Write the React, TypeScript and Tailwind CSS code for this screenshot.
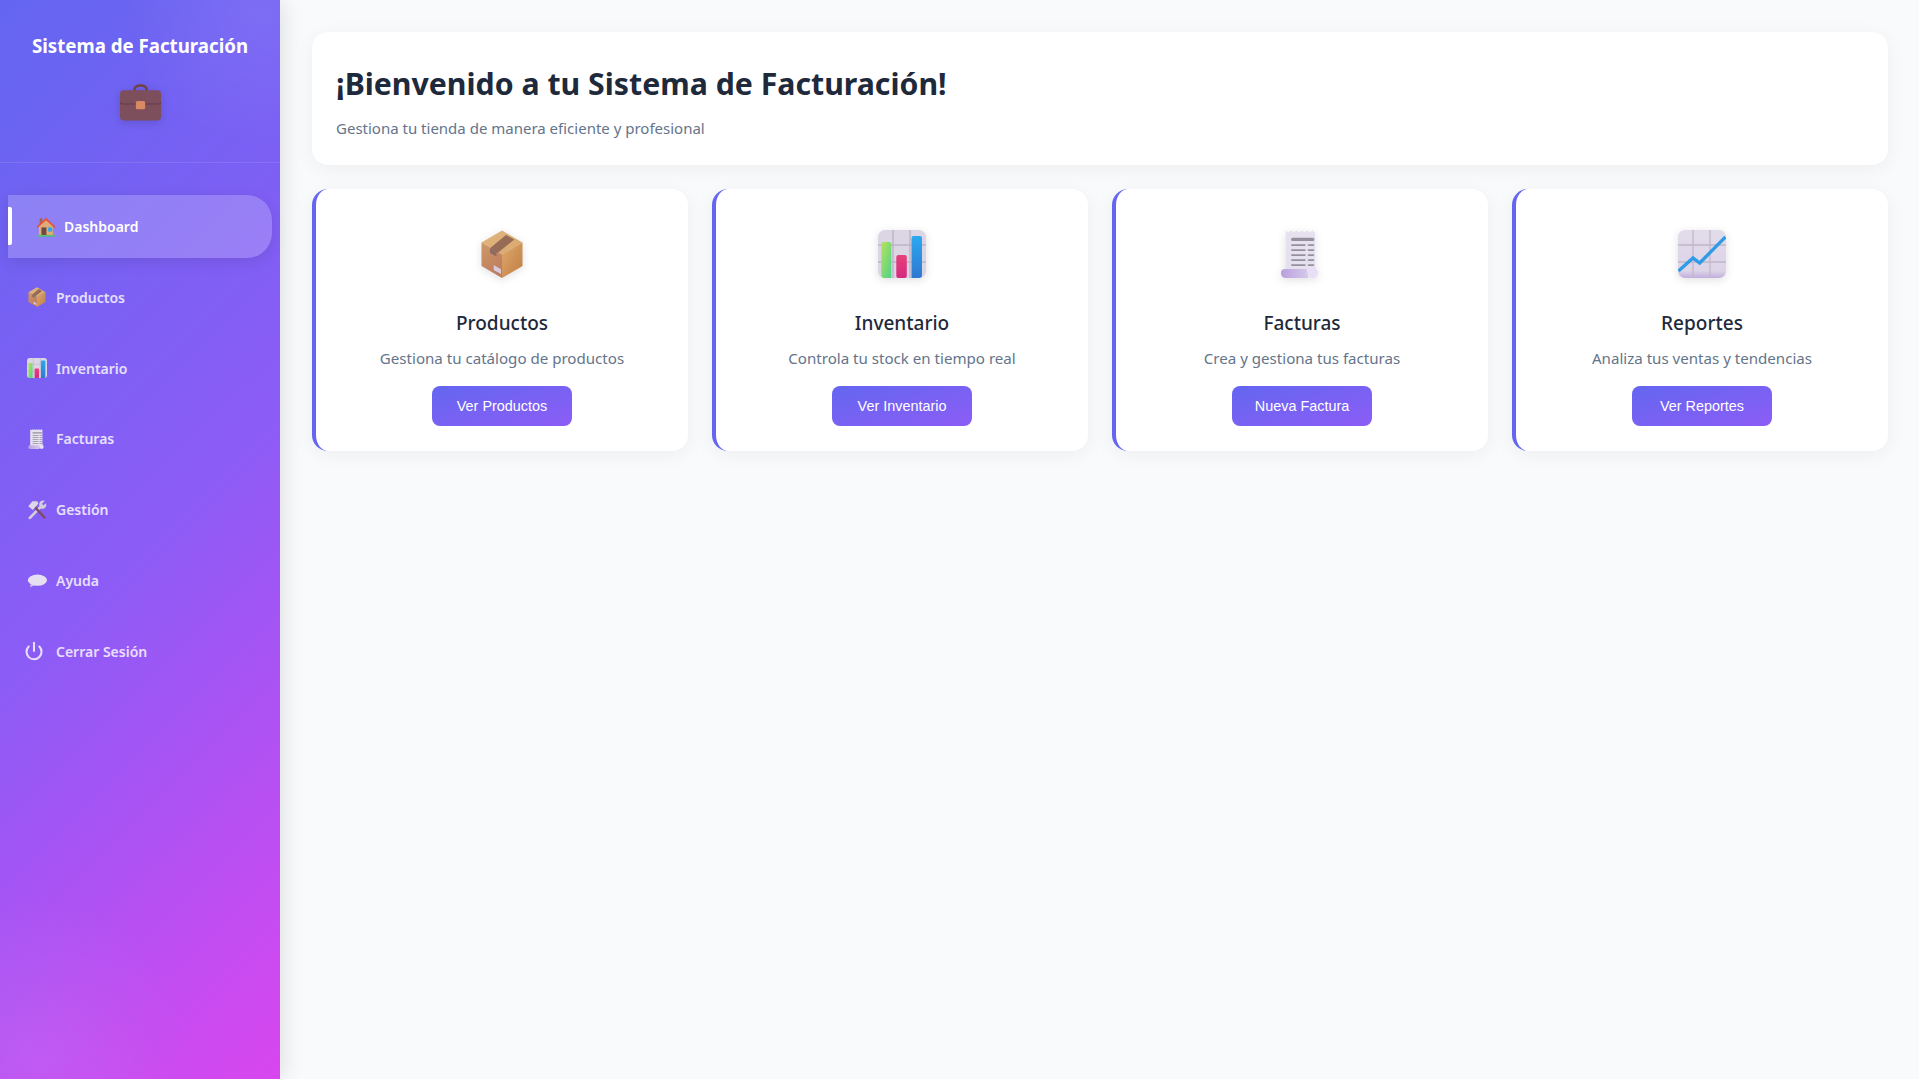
import React from 'react';
import { Power } from 'lucide-react';

type IconProps = { size: number; className?: string };

const BoxIcon = ({ size, className }: IconProps) => (
  <svg width={size} height={size} viewBox="0 0 48 48" className={className}>
    <defs>
      <linearGradient id="boxTop" x1="0" y1="0" x2="1" y2="1">
        <stop offset="0" stopColor="#e0b67e" />
        <stop offset="1" stopColor="#d8a870" />
      </linearGradient>
      <linearGradient id="boxLeft" x1="0" y1="0" x2="0.5" y2="1">
        <stop offset="0" stopColor="#cd9866" />
        <stop offset="1" stopColor="#bf7d60" />
      </linearGradient>
      <linearGradient id="boxRight" x1="0" y1="0" x2="1" y2="1">
        <stop offset="0" stopColor="#e0aa6c" />
        <stop offset="1" stopColor="#bf7c42" />
      </linearGradient>
    </defs>
    <path d="M24 0.5 44.5 12.5 24 24.5 3.5 12.5Z" fill="url(#boxTop)" />
    <path d="M3.5 12.5 24 24.5V48L3.5 36Z" fill="url(#boxLeft)" />
    <path d="M44.5 12.5V36L24 48V24.5Z" fill="url(#boxRight)" />
    <path d="M28 5 36.3 9.5 19.5 23 12 18.3Z" fill="#976c57" />
    <path d="M12 18.3 18.5 22V26.5L12 23Z" fill="#8c6c62" />
    <path d="M15.7 35 23 39.3V44L15.7 40Z" fill="#d9c9dd" />
  </svg>
);

const ChartIcon = ({ size, className }: IconProps) => (
  <svg width={size} height={size} viewBox="0 0 48 48" className={className}>
    <defs>
      <linearGradient id="barGreen" x1="0" y1="0" x2="1" y2="1">
        <stop offset="0" stopColor="#b6e35a" />
        <stop offset="1" stopColor="#4fd18a" />
      </linearGradient>
      <linearGradient id="barPink" x1="0" y1="0" x2="0" y2="1">
        <stop offset="0" stopColor="#e8407a" />
        <stop offset="1" stopColor="#d42a80" />
      </linearGradient>
      <linearGradient id="barBlue" x1="0" y1="0" x2="0" y2="1">
        <stop offset="0" stopColor="#2aa8f0" />
        <stop offset="1" stopColor="#2f78d0" />
      </linearGradient>
    </defs>
    <rect x="0" y="0" width="48" height="48" rx="7" fill="#dcd6e4" />
    <path d="M15 0V48M32 0V48M0 15H48M0 32H48" stroke="#bcb4c8" strokeWidth="1.4" />
    <path d="M3.3 14q0-2 2-2h6q2 0 2 2V48H6q-2.7 0-2.7-3Z" fill="url(#barGreen)" />
    <rect x="18.3" y="25" width="10.5" height="23" rx="2" fill="url(#barPink)" />
    <path d="M33.5 8q0-2 2-2h6.5q2 0 2 2V45q0 3-3 3H33.5Z" fill="url(#barBlue)" />
  </svg>
);

const ReceiptIcon = ({ size, className }: IconProps) => (
  <svg width={size} height={size} viewBox="0 0 48 48" className={className}>
    <defs>
      <linearGradient id="curl" x1="0" y1="0" x2="1" y2="0">
        <stop offset="0" stopColor="#b9a0dc" />
        <stop offset="1" stopColor="#d6c8ec" />
      </linearGradient>
    </defs>
    <path d="M7.7 1 10.5 2.5 13 0.5 15.8 2.5 18.5 0.5 21 2.5 23.8 0.5 26.5 2.5 29 0.5 31.8 2.5 34.5 0.5 37 2.5V41H7.7Z" fill="#e6e1ee" />
    <path d="M3 43Q3 39 7 39H30V48H8Q3 48 3 43Z" fill="url(#curl)" />
    <path d="M28.7 36.7H37L40 42Q40 48 34 48 29 47 28.7 40Z" fill="#e6dff5" />
    <rect x="13" y="7.7" width="23.3" height="3.3" rx="1.6" fill="#96909e" />
    <g fill="#96909e">
      <rect x="13" y="14.2" width="14.7" height="1.7" rx="0.8" />
      <rect x="29.7" y="14.2" width="6.6" height="1.7" rx="0.8" />
      <rect x="13" y="19.2" width="14.7" height="1.7" rx="0.8" />
      <rect x="29.7" y="19.2" width="6.6" height="1.7" rx="0.8" />
      <rect x="13" y="24.2" width="14.7" height="1.7" rx="0.8" />
      <rect x="29.7" y="24.2" width="6.6" height="1.7" rx="0.8" />
      <rect x="13" y="29.2" width="14.7" height="1.7" rx="0.8" />
      <rect x="29.7" y="29.2" width="6.6" height="1.7" rx="0.8" />
      <rect x="13" y="34.2" width="14.7" height="1.7" rx="0.8" />
      <rect x="29.7" y="34.2" width="6.6" height="1.7" rx="0.8" />
    </g>
  </svg>
);

const TrendIcon = ({ size, className }: IconProps) => (
  <svg width={size} height={size} viewBox="0 0 48 48" className={className}>
    <defs>
      <linearGradient id="trendBg" x1="0" y1="0" x2="0" y2="1">
        <stop offset="0" stopColor="#e2dcea" />
        <stop offset="0.85" stopColor="#ddd4e8" />
        <stop offset="1" stopColor="#c2aedd" />
      </linearGradient>
    </defs>
    <rect x="0" y="0" width="48" height="48" rx="7" fill="url(#trendBg)" />
    <path d="M15 0V48M32 0V48M0 15H48M0 32H48" stroke="#c0b7cb" strokeWidth="1.3" />
    <path d="M0.5 41 15 28 21.7 33 47.5 7" fill="none" stroke="#2f9be6" strokeWidth="3.3" />
  </svg>
);

const ToolsIcon = ({ size, className }: IconProps) => (
  <svg width={size} height={size} viewBox="0 0 48 48" className={className}>
    <path d="M7 43 35 14" stroke="#d2cedd" strokeWidth="6.5" strokeLinecap="round" />
    <path d="M31 4Q38 0 43 2L36 9 39 13 46 7Q48 14 43 19 38 23 32 20 27 12 31 4Z" fill="#d2cedd" />
    <path d="M17 15 42 42" stroke="#7e4c66" strokeWidth="6" strokeLinecap="round" />
    <path d="M3 15 13 3 25 3 27 9 14 24Z" fill="#dbd7e4" />
  </svg>
);

const BubbleIcon = ({ size, className }: IconProps) => (
  <svg width={size} height={size} viewBox="0 0 48 48" className={className}>
    <ellipse cx="25" cy="22" rx="23" ry="13.5" fill="#e6dff1" />
    <path d="M9 31 7 39 18 34Z" fill="#d3c7e9" />
  </svg>
);

const HouseIcon = ({ size, className }: IconProps) => (
  <svg width={size} height={size} viewBox="0 0 48 48" className={className}>
    <rect x="9" y="3" width="6" height="12" fill="#a0654a" />
    <path d="M7 22 24 6 41 22V44H7Z" fill="#e0ab78" />
    <path d="M1 24 24 2 47 24 44 26 24 8 4 26Z" fill="#e8502e" />
    <rect x="13" y="25" width="12" height="19" fill="#6e4a3e" />
    <rect x="29" y="25" width="10" height="10" fill="#2fa8ee" />
    <rect x="2" y="43" width="44" height="4" fill="#4fc46a" />
  </svg>
);

const BriefcaseIcon = ({ size, className }: IconProps) => (
  <svg width={size} height={size} viewBox="0 0 40 35" className={className}>
    <path d="M14 7V5.5Q14 1 20 1 26 1 26 5.5V7" fill="none" stroke="#6f4244" strokeWidth="2.4" />
    <rect x="0" y="5.5" width="40" height="29.5" rx="3.5" fill="#7d4f5c" />
    <path d="M0 17.5Q0 19 3 19H37Q40 19 40 17.5" fill="none" stroke="#643c4a" strokeWidth="1" />
    <rect x="15.5" y="16" width="9" height="8" rx="1.5" fill="#d98a62" />
  </svg>
);

const navItems = [
  { label: 'Productos', Icon: BoxIcon },
  { label: 'Inventario', Icon: ChartIcon },
  { label: 'Facturas', Icon: ReceiptIcon },
  { label: 'Gestión', Icon: ToolsIcon },
  { label: 'Ayuda', Icon: BubbleIcon },
];

const cards = [
  { title: 'Productos', text: 'Gestiona tu catálogo de productos', action: 'Ver Productos', Icon: BoxIcon },
  { title: 'Inventario', text: 'Controla tu stock en tiempo real', action: 'Ver Inventario', Icon: ChartIcon },
  { title: 'Facturas', text: 'Crea y gestiona tus facturas', action: 'Nueva Factura', Icon: ReceiptIcon },
  { title: 'Reportes', text: 'Analiza tus ventas y tendencias', action: 'Ver Reportes', Icon: TrendIcon },
];

export default function App() {
  return (
    <div className="flex min-h-screen bg-[#f8fafc] font-['Noto_Sans',sans-serif]">
      <aside className="w-[280px] shrink-0 relative bg-[radial-gradient(circle_at_92%_1%,rgba(255,255,255,0.07),transparent_12%),radial-gradient(circle_at_10%_98%,rgba(255,255,255,0.07),transparent_15%),linear-gradient(135deg,#6366f1_0%,#8b5cf6_50%,#d946ef_100%)] shadow-[4px_0_20px_rgba(0,0,0,0.1)]">
        <div className="h-[163px] pt-[32px] flex flex-col items-center border-b border-white/10">
          <h1 className="text-[18.7px] leading-[28px] font-bold text-white">Sistema de Facturación</h1>
          <BriefcaseIcon size={41} className="mt-[22px] drop-shadow-[0_2px_4px_rgba(0,0,0,0.15)]" />
        </div>
        <nav className="pt-[32px] flex flex-col gap-[8px]">
          <a className="relative h-[63px] w-[264px] ml-[8px] flex items-center pl-[28px] gap-[8px] rounded-r-[25px] bg-white/20 shadow-[0_4px_15px_rgba(0,0,0,0.1)] text-[14px] font-semibold text-white">
            <span className="absolute left-0 top-[12px] h-[38px] w-[4px] bg-white rounded-r-[2px]" />
            <HouseIcon size={20} />
            Dashboard
          </a>
          {navItems.map(({ label, Icon }) => (
            <a key={label} className="h-[62.8px] flex items-center pl-[27px] gap-[9px] text-[14px] font-semibold text-white/80">
              <Icon size={20} />
              {label}
            </a>
          ))}
          <a className="h-[62.8px] flex items-center pl-[24px] gap-[12px] text-[14px] font-semibold text-white/80">
            <Power size={20} strokeWidth={2.5} />
            Cerrar Sesión
          </a>
        </nav>
      </aside>
      <main className="flex-1 pl-[32px] pr-[31px] py-[32px] flex flex-col gap-[24px]">
        <header className="h-[133px] bg-white rounded-[16px] px-[24px] pt-[30px] shadow-[0_4px_20px_rgba(0,0,0,0.05)]">
          <h2 className="text-[30.25px] leading-[44px] font-bold text-[#1e293b]">¡Bienvenido a tu Sistema de Facturación!</h2>
          <p className="mt-[11px] text-[15px] leading-[22px] text-[#64748b]">Gestiona tu tienda de manera eficiente y profesional</p>
        </header>
        <section className="grid grid-cols-4 gap-[24px]">
          {cards.map(({ title, text, action, Icon }) => (
            <div key={title} className="h-[262px] bg-white rounded-[16px] border-l-4 border-[#6366f1] pt-[41px] flex flex-col items-center shadow-[0_4px_20px_rgba(0,0,0,0.05)]">
              <Icon size={48} className="drop-shadow-[0_2px_4px_rgba(0,0,0,0.12)]" />
              <h3 className="mt-[31px] text-[19px] leading-[28px] font-medium text-[#1e293b]">{title}</h3>
              <p className="mt-[11px] text-[15.1px] leading-[20px] text-[#64748b]">{text}</p>
              <button className="mt-[18px] w-[140px] h-[40px] pt-px rounded-[8px] bg-gradient-to-br from-[#6366f1] to-[#8b5cf6] text-white text-[14.4px] font-['Liberation_Sans',sans-serif]">{action}</button>
            </div>
          ))}
        </section>
      </main>
    </div>
  );
}
